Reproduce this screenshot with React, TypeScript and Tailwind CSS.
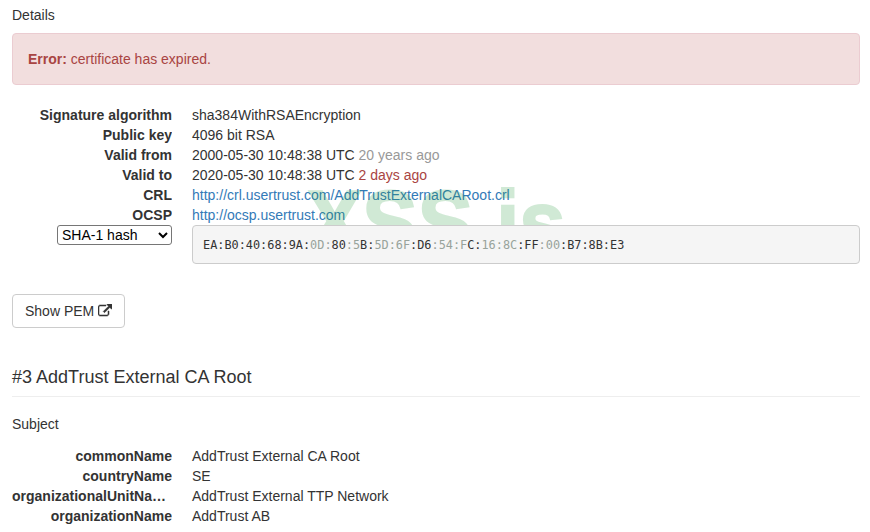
import React from "react";

const Row = ({ label, children }: { label: string; children: React.ReactNode }) => (
  <div className="flex h-5 gap-5">
    <div className="w-40 shrink-0 truncate text-right font-bold">{label}</div>
    <div>{children}</div>
  </div>
);

// hash characters the watermark washes out in the reference
const Faded = ({ children }: { children: React.ReactNode }) => (
  <span className="text-[#98a39b]">{children}</span>
);

const App = () => {
  return (
    <div className="relative h-[532px] w-[870px] overflow-hidden bg-white pr-[10px] pl-3 font-['Liberation_Sans',Arial,sans-serif] text-[14px] leading-5 text-[#333333]">
      <div className="pt-[5px]">Details</div>

      {/* Error banner */}
      <div className="mt-2 h-[52px] rounded border border-[#ebccd1] bg-[#f2dede] px-[15px] py-[15px] text-[#a94442]">
        <b>Error:</b> certificate has expired.
      </div>

      <div className="mt-5">
        <Row label="Signature algorithm">sha384WithRSAEncryption</Row>
        <Row label="Public key">4096 bit RSA</Row>
        <Row label="Valid from">
          2000-05-30 10:48:38 UTC <span className="text-[#999999]">20 years ago</span>
        </Row>
        <Row label="Valid to">
          2020-05-30 10:48:38 UTC <span className="text-[#a94442]">2 days ago</span>
        </Row>
        <Row label="CRL">
          <a className="text-[#337ab7]">http://crl.usertrust.com/AddTrustExternalCARoot.crl</a>
        </Row>
        <Row label="OCSP">
          <a className="text-[#337ab7]">http://ocsp.usertrust.com</a>
        </Row>
        <div className="flex gap-5">
          <div className="flex w-40 shrink-0 justify-end">
            <select className="h-5 w-[115px] rounded-[3px] border border-[#767676] bg-white text-[14px] leading-4 text-black">
              <option>SHA-1 hash</option>
            </select>
          </div>
          {/* sits above the watermark: the box background hides the letters */}
          <pre className="relative z-20 h-[39px] flex-1 rounded border border-[#cccccc] bg-[#f5f5f5] px-[10px] py-[9.5px] font-['DejaVu_Sans_Mono','Liberation_Mono',monospace] text-[11.87px] leading-[18px]">
            EA:B0:40:68:9A:<Faded>0D:</Faded>80<Faded>:5</Faded>B:<Faded>5D:6F</Faded>:D6<Faded>:54:F</Faded>C:<Faded>16:8C</Faded>:FF<Faded>:00</Faded>:B7:8B:E3
          </pre>
        </div>
      </div>

      <button className="mt-[30px] flex h-[34px] w-[113px] items-center gap-1 rounded border border-[#cccccc] bg-white px-3 whitespace-nowrap">
        Show PEM
        <svg viewBox="0 0 1792 1792" className="h-[14px] w-[14px] shrink-0" fill="#333333" stroke="#333333" strokeWidth="70">
          <path d="M1408 928v320q0 119-84.500 203.500t-203.500 84.500h-832q-119 0-203.500-84.500t-84.500-203.500v-832q0-119 84.500-203.500t203.500-84.500h704q14 0 23 9t9 23v64q0 14-9 23t-23 9h-704q-66 0-113 47t-47 113v832q0 66 47 113t113 47h832q66 0 113-47t47-113v-320q0-14 9-23t23-9h64q14 0 23 9t9 23zm384-864v512q0 26-19 45t-45 19-45-19l-176-176-652 652q-10 10-23 10t-23-10l-114-114q-10-10-10-23t10-23l652-652-176-176q-19-19-19-45t19-45 45-19h512q26 0 45 19t19 45z" />
        </svg>
      </button>

      <h3 className="mt-[39px] border-b border-[#eeeeee] pb-[9px] text-[18px] leading-5 font-normal">
        #3 AddTrust External CA Root
      </h3>

      <div className="mt-[17px]">Subject</div>
      <div className="mt-3">
        <Row label="commonName">AddTrust External CA Root</Row>
        <Row label="countryName">SE</Row>
        <Row label="organizationalUnitName">AddTrust External TTP Network</Row>
        <Row label="organizationName">AddTrust AB</Row>
      </div>

      {/* Watermark over the page */}
      <div className="pointer-events-none absolute top-[177px] left-[307px] z-10 origin-top scale-y-[1.1] text-[83px] leading-[83px] font-bold text-[#2ea043] opacity-[0.22] [-webkit-text-stroke:2px_#2ea043]">
        XSS.is
      </div>
    </div>
  );
};

export default App;
